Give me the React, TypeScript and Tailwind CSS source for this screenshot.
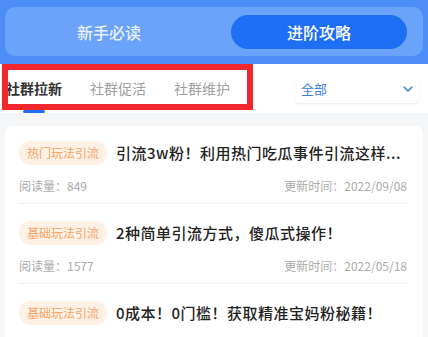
import { ChevronDown } from "lucide-react";

type Article = {
  tag: string;
  title: string;
  reads: number;
  updated: string;
};

const articles: Article[] = [
  {
    tag: "热门玩法引流",
    title: "引流3w粉！利用热门吃瓜事件引流这样...",
    reads: 849,
    updated: "2022/09/08",
  },
  {
    tag: "基础玩法引流",
    title: "2种简单引流方式，傻瓜式操作！",
    reads: 1577,
    updated: "2022/05/18",
  },
  {
    tag: "基础玩法引流",
    title: "0成本！0门槛！获取精准宝妈粉秘籍！",
    reads: 2034,
    updated: "2022/04/27",
  },
];

const tabs = ["社群拉新", "社群促活", "社群维护"];

const App = () => {
  return (
    <div className="w-[428px] h-[337px] overflow-hidden bg-[#f5f6f8] font-['Noto_Sans_CJK_SC','Noto_Sans',sans-serif]">
      {/* 顶部切换 */}
      <div className="h-[64px] bg-[#4d8df6] px-[5px] pt-[7px]">
        <div className="h-[49px] rounded-[10px] bg-[#6aa3f9] flex items-center justify-between px-[16px]">
          <div className="w-[176px] h-[34px] rounded-full flex items-center justify-center text-[16px] font-medium text-[#eaf2ff]">
            新手必读
          </div>
          <div className="w-[176px] h-[34px] rounded-full bg-[#1f6ff5] flex items-center justify-center text-[16px] font-medium text-white">
            进阶攻略
          </div>
        </div>
      </div>

      {/* 分类 & 筛选 */}
      <div className="relative h-[49px] bg-white flex items-center">
        <div className="flex h-full gap-[28px] pl-[6px]">
          {tabs.map((tab, i) => (
            <div
              key={tab}
              className={
                i === 0
                  ? "relative h-full flex items-center text-[14px] font-bold text-[#333333]"
                  : "relative h-full flex items-center text-[14px] text-[#a0a0a0]"
              }
            >
              {tab}
              {i === 0 && (
                <span className="absolute bottom-0 left-1/2 -translate-x-1/2 w-[22px] h-[3px] rounded-full bg-[#1f6ff5]" />
              )}
            </div>
          ))}
        </div>
        <div className="ml-auto mr-[9px] w-[124px] h-[28px] rounded-[4px] bg-white shadow-[0_1px_2px_rgba(0,0,0,0.08)] flex items-center justify-between pl-[6px] pr-[3px]">
          <span className="text-[13px] text-[#3f7ddb]">全部</span>
          <ChevronDown size={16} strokeWidth={2.2} color="#3f7ddb" />
        </div>
        {/* 标注框 */}
        <div className="absolute left-[2px] top-0 w-[251px] h-[46px] border-[6px] border-[#f0282d] pointer-events-none" />
      </div>

      {/* 文章列表 */}
      <div className="mx-[5px] mt-[13px] rounded-[8px] bg-white">
        {articles.map((a, i) => (
          <div key={a.title} className={i === 0 ? "px-[14px] pt-[15px]" : "px-[14px] pt-[17px]"}>
            <div className="border-b border-[#f1f1f3] pb-[9px] pr-[2px]">
              <div className="flex items-center h-[24px]">
                <span className="shrink-0 h-[24px] px-[8px] rounded-full bg-[#fff1e5] text-[12px] text-[#f3a466] flex items-center">
                  {a.tag}
                </span>
                <span className="ml-[9px] min-w-0 truncate text-[15px] font-medium tracking-[0.5px] text-[#222222]">
                  {a.title}
                </span>
              </div>
              <div className="mt-[13px] flex justify-between text-[12px] leading-[16px] text-[#ababab]">
                <span>阅读量：{a.reads}</span>
                <span>更新时间：{a.updated}</span>
              </div>
            </div>
          </div>
        ))}
      </div>
    </div>
  );
};

export default App;
